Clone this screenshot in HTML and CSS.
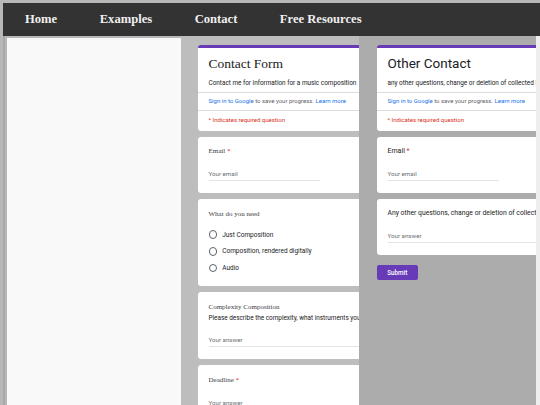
FILE: index.html
```html
<!DOCTYPE html>
<html>
<head>
<meta charset="utf-8">
<link rel="stylesheet" href="styles.css">
</head>
<body>
<nav class="topnav">
  <a class="nav-link" href="#">Home</a>
  <a class="nav-link" href="#">Examples</a>
  <a class="nav-link" href="#">Contact</a>
  <a class="nav-link" href="#">Free Resources</a>
</nav>
<div class="frames">
  <div class="pane pane-blank"></div>

  <div class="pane pane-mid">
    <div class="card card-head">
      <div class="head-block">
        <h1 class="form-title serif">Contact Form</h1>
        <div class="form-desc">Contact me for information for a music composition</div>
      </div>
      <div class="signin"><span class="link">Sign in to Google</span> to save your progress. <span class="link">Learn more</span></div>
      <div class="required">* Indicates required question</div>
    </div>

    <div class="card q-card">
      <div class="q-title serif">Email <span class="star">*</span></div>
      <div class="input short">Your email</div>
    </div>

    <div class="card q-card radio-card">
      <div class="q-title serif">What do you need</div>
      <div class="options">
        <div class="option"><span class="radio"></span><span>Just Composition</span></div>
        <div class="option"><span class="radio"></span><span>Composition, rendered digitally</span></div>
        <div class="option"><span class="radio"></span><span>Audio</span></div>
      </div>
    </div>

    <div class="card q-card desc-card">
      <div class="q-title serif">Complexity Composition</div>
      <div class="q-desc">Please describe the complexity, what instruments you would like and how long the piece should be</div>
      <div class="input long">Your answer</div>
    </div>

    <div class="card q-card">
      <div class="q-title serif">Deadline <span class="star">*</span></div>
      <div class="input long">Your answer</div>
    </div>
  </div>

  <div class="pane pane-right">
    <div class="card card-head">
      <div class="head-block">
        <h1 class="form-title sans">Other Contact</h1>
        <div class="form-desc">any other questions, change or deletion of collected information</div>
      </div>
      <div class="signin"><span class="link">Sign in to Google</span> to save your progress. <span class="link">Learn more</span></div>
      <div class="required">* Indicates required question</div>
    </div>

    <div class="card q-card">
      <div class="q-title sans">Email <span class="star">*</span></div>
      <div class="input short">Your email</div>
    </div>

    <div class="card q-card">
      <div class="q-title sans small">Any other questions, change or deletion of collected information</div>
      <div class="input long">Your answer</div>
    </div>

    <div class="actions">
      <button class="submit" type="button">Submit</button>
    </div>
  </div>

  <div class="pane-strip"></div>
</div>
</body>
</html>
```

FILE: styles.css
```css
* { box-sizing: border-box; }

html, body { margin: 0; }

body {
  background: #b8b8b8;
  padding: 3px 0 0 3px;
  height: 405px;
  overflow: hidden;
  font-family: Roboto, "Liberation Sans", sans-serif;
}

.topnav {
  height: 33px;
  background: #333333;
  display: flex;
  align-items: center;
  gap: 42.5px;
  padding-left: 22px;
}

.nav-link {
  font: bold 12.6px "Liberation Serif", "DejaVu Serif", serif;
  color: #f0f0f0;
  text-decoration: none;
}

.frames {
  display: flex;
  height: 369px;
  border-left: 2px solid #a8a8a8;
}

.pane {
  flex-shrink: 0;
  overflow: hidden;
}

.pane-blank {
  width: 174px;
  margin: 2px 0 0 2px;
  background: #f9f9f9;
}

.pane-mid {
  width: 178px;
  background: #bdbdbd;
  padding: 9px 0 0 17px;
  display: flex;
  flex-direction: column;
  gap: 6px;
}

.pane-right {
  width: 177px;
  background: #acacac;
  padding: 9px 0 0 18px;
  display: flex;
  flex-direction: column;
  gap: 6px;
}

.pane-strip {
  width: 4px;
  background: #eeeeee;
}

.card {
  width: 270px;
  flex-shrink: 0;
  background: #ffffff;
  border-radius: 3px;
  white-space: nowrap;
}

.card-head {
  border-top: 3px solid #673ab7;
}

.head-block {
  padding: 7px 10.5px 5.5px;
}

.form-title {
  margin: 0;
  font-weight: normal;
  font-size: 13.5px;
  line-height: 17px;
  color: #202124;
}

.serif { font-family: "Liberation Serif", "DejaVu Serif", serif; }
.sans { font-family: Roboto, "Liberation Sans", sans-serif; }

.form-desc {
  margin-top: 6.8px;
  font-size: 6.4px;
  line-height: 8px;
  color: #202124;
}

.signin {
  border-top: 1px solid #dadce0;
  height: 17.7px;
  line-height: 16.7px;
  padding: 0 10.5px;
  font-size: 6px;
  color: #5f6368;
}

.link { color: #1a73e8; }

.required {
  border-top: 1px solid #dadce0;
  padding: 5px 10.5px 7px;
  line-height: 8px;
  font-size: 6px;
  color: #d93025;
}

.q-card {
  padding: 10.5px 10.5px 11.5px;
}

.q-title {
  font-size: 7px;
  line-height: 9px;
  color: #202124;
}

.q-title.small { font-size: 6.8px; }

.q-title.serif { color: #3c4043; }

.star { color: #d93025; }

.input {
  margin-top: 13.8px;
  font-size: 6.2px;
  line-height: 9px;
  padding-bottom: 1.2px;
  border-bottom: 1px solid #e4e4e4;
  color: #6b6f74;
}

.input.short { width: 111px; }

.radio-card {
  padding: 11px 10.5px 9.7px;
}

.options {
  margin-top: 7.4px;
  display: flex;
  flex-direction: column;
}

.option {
  height: 16.6px;
  display: flex;
  align-items: center;
  gap: 5px;
  font-size: 6.5px;
  color: #202124;
}

.radio {
  width: 8.7px;
  height: 8.7px;
  border: 1px solid #5f6368;
  border-radius: 50%;
  flex-shrink: 0;
}

.desc-card {
  padding: 11.5px 10.5px 12.5px;
}

.q-desc {
  margin-top: 2px;
  font-size: 6.4px;
  line-height: 8px;
  color: #202124;
}

.desc-card .input { margin-top: 13.3px; }

.actions {
  margin-top: -1px;
}

.submit {
  width: 40.6px;
  height: 15px;
  padding: 0;
  border: none;
  border-radius: 2px;
  background: #673ab7;
  color: #ffffff;
  font-family: Roboto, "Liberation Sans", sans-serif;
  font-size: 6.3px;
  font-weight: 500;
}
```
